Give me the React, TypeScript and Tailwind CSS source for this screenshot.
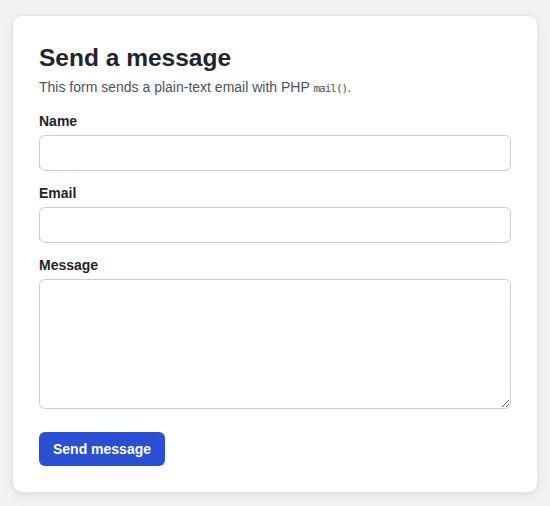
const fieldClass =
	"block w-full rounded-[6px] border border-[#c9cdd3] bg-white px-3 text-[14px] text-[#1f2430] outline-none";

function Field({ label, id, children }: { label: string; id: string; children: React.ReactNode }) {
	return (
		<div className="mt-3 first:mt-4">
			<label htmlFor={id} className="mb-1 block text-[14px] leading-5 font-bold text-[#1f2430]">
				{label}
			</label>
			{children}
		</div>
	);
}

export default function App() {
	return (
		<div className="min-h-screen bg-[#f1f2f4] px-3 pt-[15px] pb-3 font-['Liberation_Sans',Arial,sans-serif]">
			<form
				className="rounded-[10px] border border-[#e3e5e8] bg-white px-[26px] pt-[27px] pb-[26px] shadow-[0_1px_3px_rgba(0,0,0,0.06),0_4px_14px_rgba(0,0,0,0.05)]"
				onSubmit={(e) => e.preventDefault()}
			>
				<h1 className="text-[24.5px] leading-[30px] font-bold text-[#1f2430]">Send a message</h1>
				<p className="mt-1 text-[14px] leading-5 text-[#4b5261]">
					This form sends a plain-text email with PHP{" "}
					<code className="font-['DejaVu_Sans_Mono',monospace] text-[11px] tracking-[-1px]">mail()</code>.
				</p>

				<Field label="Name" id="name">
					<input id="name" type="text" className={`${fieldClass} h-9`} />
				</Field>
				<Field label="Email" id="email">
					<input id="email" type="email" className={`${fieldClass} h-9`} />
				</Field>
				<Field label="Message" id="message">
					<textarea id="message" className={`${fieldClass} h-[130px] py-2`} />
				</Field>

				<button
					type="submit"
					className="mt-[23px] h-[34px] w-[126px] rounded-[6px] bg-[#2a4fd3] text-[14px] font-bold text-white"
				>
					Send message
				</button>
			</form>
		</div>
	);
}
